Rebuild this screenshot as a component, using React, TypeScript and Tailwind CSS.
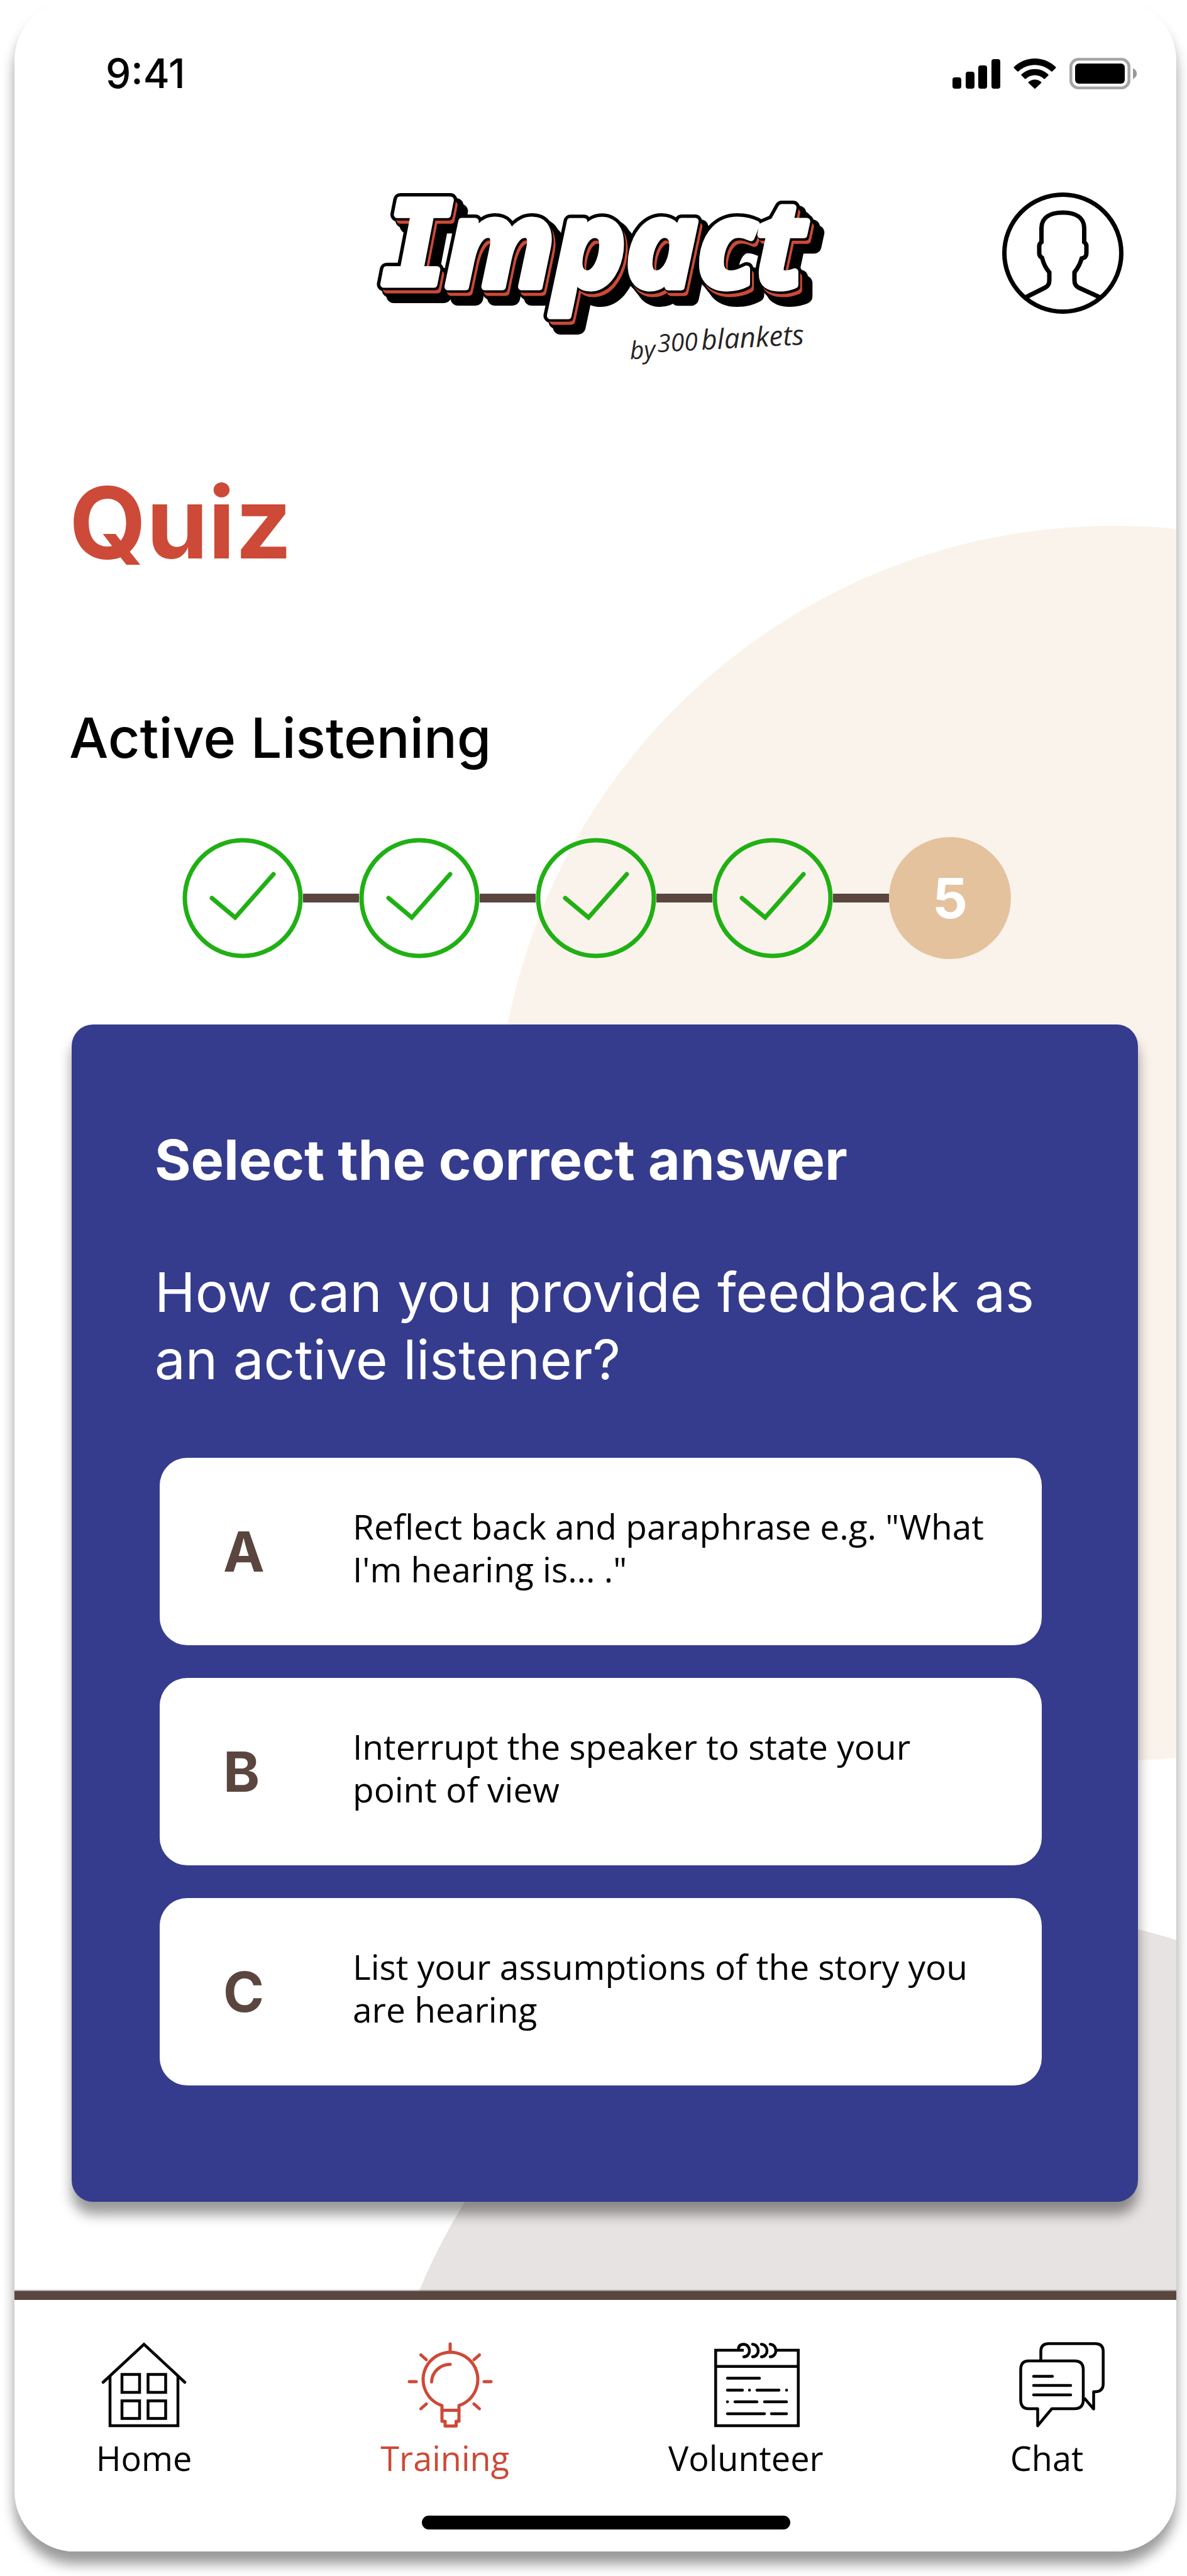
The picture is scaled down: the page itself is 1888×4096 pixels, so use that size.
import React from "react";

const answers = [
  { letter: "A", text: "Reflect back and paraphrase e.g. \"What\nI'm hearing is... .\"" },
  { letter: "B", text: "Interrupt the speaker to state your\npoint of view" },
  { letter: "C", text: "List your assumptions of the story you\nare hearing" },
];

function SignalIcon() {
  return (
    <svg className="h-12 w-[76px]" viewBox="0 0 76 48" aria-hidden="true">
      <rect x="0" y="30" width="14" height="18" rx="4" />
      <rect x="21" y="21" width="14" height="27" rx="4" />
      <rect x="41" y="11" width="14" height="37" rx="4" />
      <rect x="62" y="1" width="14" height="47" rx="4" />
    </svg>
  );
}

function WifiIcon() {
  return (
    <svg className="h-12 w-[68px]" viewBox="0 0 68 48" aria-hidden="true">
      <path d="M.6 13.4Q0 14.4.8 15.2l5.4 5.2q.9.8 1.8 0C15.4 13.6 24.500 10.200 34 10.200s18.600 3.400 26 10.200q.9.8 1.800 0l5.400-5.200q.8-.8.1-1.700C58.300 4.900 46.600 0 34 0S9.700 4.900.6 13.400z" />
      <path d="M12.600 25.300q-.9.900 0 1.700l5.400 5.200q.9.800 1.800 0c4-3.500 8.900-5.600 14.200-5.600s10.200 2.100 14.200 5.600q.9.800 1.800 0l5.400-5.200q.9-.8 0-1.700C49.600 19.900 42.100 16.700 34 16.700s-15.600 3.200-21.400 8.600z" />
      <path d="M24 37.200q-.9.900 0 1.800l9.200 8.700q.8.700 1.600 0L44 39q.9-.9 0-1.800c-2.800-2.300-6.300-3.700-10-3.700s-7.200 1.400-10 3.700z" />
    </svg>
  );
}

function BatteryIcon() {
  return (
    <svg className="h-[50px] w-[108px]" viewBox="0 0 108 50" aria-hidden="true">
      <rect x="2.300" y="2.300" width="92.400" height="45.400" rx="12" fill="none" stroke="#a6a6a6" strokeWidth="4.600" />
      <rect x="9" y="9" width="79" height="32" rx="6" />
      <path d="M101 16.500c4 1.800 6.200 5 6.200 8.500s-2.200 6.700-6.200 8.500z" fill="#9a9a9a" />
    </svg>
  );
}

function ProfileIcon() {
  return (
    <svg className="size-[193px]" viewBox="0 0 193 193" fill="none" stroke="#000" strokeWidth="7" aria-hidden="true">
      <circle cx="96.500" cy="96.500" r="93" />
      <path d="M37 167 68 151.500Q75 148 75 140V127Q67 118 63.500 104 59 101.500 59 97V85Q59 81.500 62.500 79V57C62.500 40 76 32 96.500 32S130.500 40 130.500 57V79Q134 81.500 134 85V97Q134 103.500 126.500 105 123 117 115 127V140Q115 148 122 151.500L156 167" />
    </svg>
  );
}

function Logo() {
  return (
    <svg className="h-[294px] w-[730px] overflow-visible" viewBox="582 296 730 294" role="img" aria-label="Impact by 300 blankets">
      <defs>
        <g id="logo-word">
          <text
            fontFamily="'Open Sans', sans-serif"
            fontWeight="700"
            fontStyle="italic"
            fontSize="191"
            strokeLinejoin="round"
          >
            <tspan x="608" y="452" fontFamily="'DejaVu Sans Mono', monospace" fontSize="184">I</tspan>
            <tspan x="709" y="456">mpact</tspan>
          </text>
        </g>
      </defs>
      <use href="#logo-word" x="16" y="18" fill="#000" stroke="#000" strokeWidth="24" />
      <use href="#logo-word" x="9" y="9" fill="#000" stroke="#000" strokeWidth="24" />
      <use href="#logo-word" fill="#000" stroke="#000" strokeWidth="22" />
      <use href="#logo-word" x="5" y="8" fill="#cc4a37" stroke="#cc4a37" strokeWidth="13" />
      <use href="#logo-word" x="2" y="3" fill="#000" stroke="#000" strokeWidth="13" />
      <use href="#logo-word" fill="#fff" stroke="#fff" strokeWidth="11" />
      <text
        transform="rotate(-3 1140 557)"
        fontFamily="'Open Sans', sans-serif"
        fontStyle="italic"
        fontSize="39"
        fill="#272324"
      >
        <tspan x="1002" y="564">by</tspan>
        <tspan x="1046" y="555">300</tspan>
        <tspan x="1116" y="555" fontSize="44">blankets</tspan>
      </text>
    </svg>
  );
}

function CheckIcon() {
  return (
    <svg className="size-48" viewBox="0 0 192 192" fill="none" stroke="#20b014" strokeWidth="7" aria-hidden="true">
      <circle cx="96" cy="96" r="92" />
      <path d="M47 96 84 127 145 58" strokeLinecap="round" />
    </svg>
  );
}

function HomeIcon() {
  return (
    <svg className="size-[136px]" viewBox="0 0 136 136" fill="none" stroke="currentColor" strokeWidth="4.500" aria-hidden="true">
      <path d="M3 64 68 3.500 133 64" strokeLinecap="round" />
      <path d="M14 54V133H122V54" />
      <path d="M33 51.500H61V80H33zM74.500 51.500H102.500V80H74.500zM33 93.500H61V121.500H33zM74.500 93.500H102.500V121.500H74.500z" />
    </svg>
  );
}

function BulbIcon() {
  return (
    <svg className="size-[136px]" viewBox="0 0 136 136" fill="none" stroke="currentColor" strokeWidth="5" strokeLinecap="round" strokeLinejoin="round" aria-hidden="true">
      <path d="M55 126V101A43.500 43.500 0 1 1 82 101V126H77.500V133.500H60V126z" />
      <path d="M55 108.500H82M38.500 63.500A29.500 28.500 0 0 1 68 35.500" />
      <path d="M68 3V13M3 63H14M122 63H133M21.500 20.500 30 28M114.500 20.500 106 28M21.500 106 30 98.500M114.500 106 106 98.500" />
    </svg>
  );
}

function NotepadIcon() {
  return (
    <svg className="size-[136px]" viewBox="0 0 136 136" fill="none" stroke="currentColor" strokeWidth="4.500" aria-hidden="true">
      <path d="M47 13H2.300V133H133.700V13H99M2.300 38.700H133.700" />
      <path
        strokeLinecap="round"
        d="M38.500 12C38.500 6 42 3.500 47 3.500 59 4.500 59 23 47 23.500M61 3.500C73 4.500 73 23 61 23.500M75 3.500C87 4.500 87 23 75 23.500M89 3.500C101 4.500 101 23 89 23.500"
      />
      <path
        strokeLinecap="round"
        d="M21 57.500H72M21 76.500H45M56 76.500H56.200M68 76.500H103M115 76.500H115.200M21 95H21.200M33 95H68M80 95H115M21 114H80M91 114H115"
      />
    </svg>
  );
}

function ChatIcon() {
  return (
    <svg className="size-[136px]" viewBox="0 0 136 136" fill="none" stroke="currentColor" strokeWidth="4.500" strokeLinejoin="round" aria-hidden="true">
      <path d="M34.500 29V15Q34.500 2.500 47 2.500H121Q133.700 2.500 133.700 15V66Q133.700 79 121 79H118.500V106.500L103.500 89" />
      <path d="M15 30H88Q102 30 102 44V92Q102 106 88 106H52L29.500 133V106H15Q2.500 106 2.500 92V44Q2.500 30 15 30z" />
      <path strokeLinecap="round" d="M23 54.500H53M23 69H82M23 84H82" />
    </svg>
  );
}

const tabs = [
  { label: "Home", Icon: HomeIcon, color: "text-black", shift: "" },
  { label: "Training", Icon: BulbIcon, color: "text-[#cc4a37]", shift: "pl-4" },
  { label: "Volunteer", Icon: NotepadIcon, color: "text-black", shift: "pl-9" },
  { label: "Chat", Icon: ChatIcon, color: "text-black", shift: "pl-12" },
];

export default function App() {
  return (
    <div className="overflow-hidden bg-white pr-[17px] pb-[39px] pl-[23px] font-['Inter',sans-serif] text-black [font-optical-sizing:none]">
      <div className="relative rounded-[96px] bg-white shadow-[0_20px_20px_rgba(0,0,0,0.4)]">
        <div className="absolute inset-0 overflow-hidden rounded-[96px]" aria-hidden="true">
          <div className="absolute top-[836px] right-[-882px] size-[1964px] rounded-full bg-[#faf3ec]" />
          <div className="absolute right-[-681px] bottom-[-941px] size-[1960px] rounded-full bg-[#e6e3e2]" />
        </div>

        <div className="relative">
          <div className="flex items-center justify-between pt-[77px] pr-[62px] pl-[145px]">
            <span className="text-[64px] leading-[80px] font-medium">9:41</span>
            <div className="flex items-center gap-[21px]">
              <SignalIcon />
              <WifiIcon />
              <BatteryIcon />
            </div>
          </div>

          <header className="mt-[139px] grid grid-cols-[1fr_auto_1fr] pr-[84px] pl-[84px]">
            <div className="col-start-2">
              <Logo />
            </div>
            <button type="button" aria-label="Profile" className="mt-[10px] self-start justify-self-end">
              <ProfileIcon />
            </button>
          </header>

          <main>
            <h1 className="mt-[145px] pl-[87px] text-[158px] leading-[192px] font-bold text-[#cc4a37]">Quiz</h1>
            <h2 className="mt-[193px] pl-[87px] text-[88px] leading-[107px] font-medium">Active Listening</h2>

            <ol className="mt-[104px] flex items-center justify-center pl-1">
              {[1, 2, 3, 4].map((n) => (
                <li key={n} className="flex items-center" aria-label={"Question " + n + " done"}>
                  <CheckIcon />
                  <span className="h-[14px] w-[89px] bg-[#5a463e]" />
                </li>
              ))}
              <li className="flex size-[194px] items-center justify-center rounded-full bg-[#e4c29e] text-[88px] font-bold text-white">
                5
              </li>
            </ol>

            <section className="mt-[104px] mr-[61px] ml-[91px] rounded-[34px] bg-[#353c8d] pt-[162px] pr-[153px] pb-[185px] pl-[132px] text-white shadow-[0_20px_20px_rgba(0,0,0,0.4)]">
              <h3 className="text-[88px] leading-[107px] font-bold">Select the correct answer</h3>
              <p className="mt-[103px] text-[87px] leading-[107px]">How can you provide feedback as an active listener?</p>
              <div className="mt-[103px] ml-2 flex flex-col gap-[52px]">
                {answers.map(({ letter, text }) => (
                  <button
                    key={letter}
                    type="button"
                    className="flex h-[298px] items-center rounded-[44px] bg-white pl-[101px] text-left"
                  >
                    <span className="w-[206px] shrink-0 text-[88px] leading-[107px] font-bold text-[#5a463e]">{letter}</span>
                    <span className="pb-3 font-['Open_Sans',sans-serif] text-[55px] leading-[68px] whitespace-pre text-black">
                      {text}
                    </span>
                  </button>
                ))}
              </div>
            </section>
          </main>

          <footer className="mt-[142px] rounded-b-[96px] border-t-[14px] border-[#5a463e] bg-white pt-[67px] pb-[35px] shadow-[0_-2px_0_rgba(0,0,0,0.3)]">
            <nav className="flex justify-between px-[66px]">
              {tabs.map(({ label, Icon, color, shift }) => (
                <a key={label} href={"#" + label.toLowerCase()} className={"flex w-[280px] flex-col items-center " + color}>
                  <span className={shift}>
                    <Icon />
                  </span>
                  <span className="mt-[14px] font-['Open_Sans',sans-serif] text-[54px] leading-[68px]">{label}</span>
                </a>
              ))}
            </nav>
            <div className="mt-[58px] flex justify-center pl-[34px]">
              <div className="h-[22px] w-[586px] rounded-full bg-black" />
            </div>
          </footer>
        </div>
      </div>
    </div>
  );
}
